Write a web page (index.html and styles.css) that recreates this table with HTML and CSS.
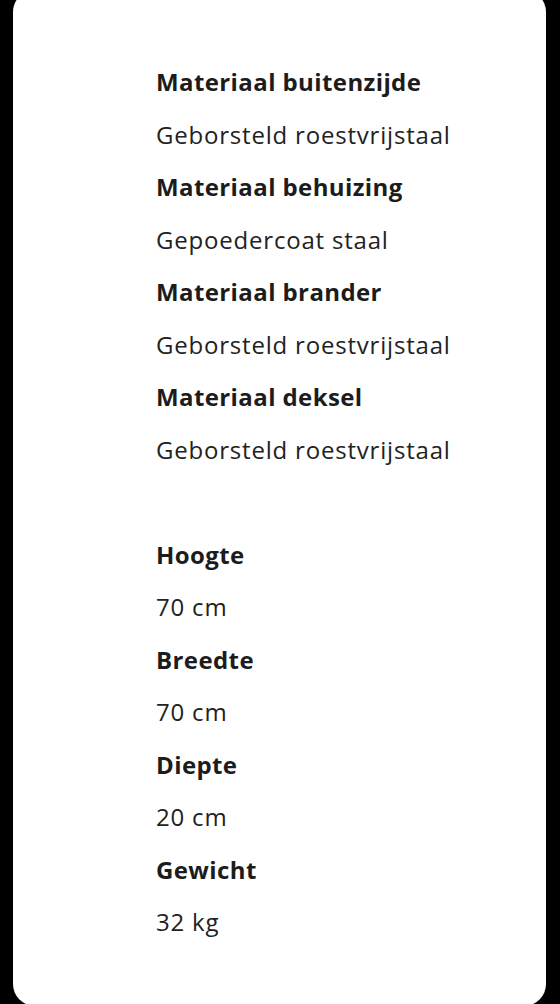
FILE: index.html
```html
<!DOCTYPE html>
<html lang="nl">
<head>
<meta charset="utf-8">
<link rel="stylesheet" href="styles.css">
</head>
<body>
<div class="card">
  <dl class="specs">
    <dt>Materiaal buitenzijde</dt>
    <dd>Geborsteld roestvrijstaal</dd>
    <dt>Materiaal behuizing</dt>
    <dd>Gepoedercoat staal</dd>
    <dt>Materiaal brander</dt>
    <dd>Geborsteld roestvrijstaal</dd>
    <dt>Materiaal deksel</dt>
    <dd>Geborsteld roestvrijstaal</dd>
  </dl>
  <dl class="specs specs-gap">
    <dt>Hoogte</dt>
    <dd>70 cm</dd>
    <dt>Breedte</dt>
    <dd>70 cm</dd>
    <dt>Diepte</dt>
    <dd>20 cm</dd>
    <dt>Gewicht</dt>
    <dd>32 kg</dd>
  </dl>
</div>
</body>
</html>
```
FILE: styles.css
```css
html, body {
  margin: 0;
  padding: 0;
  background: #000;
}
body {
  height: 1004px;
  overflow: hidden;
}
.card {
  margin: -10px 14px 0 13px;
  height: 1016px;
  background: #fff;
  border-radius: 22px;
  padding: 66px 0 0 143px;
  box-sizing: border-box;
  font-family: "Open Sans", Lato, sans-serif;
  font-size: 24px;
  line-height: 52.5px;
}
.specs {
  margin: 0;
}
.specs-gap {
  margin-top: 52.5px;
}
.specs dt {
  font-weight: 700;
  color: #1c1c1c;
  letter-spacing: 0.4px;
}
.specs dd {
  margin: 0;
  font-weight: 400;
  color: #222;
  letter-spacing: 0.8px;
}
```
